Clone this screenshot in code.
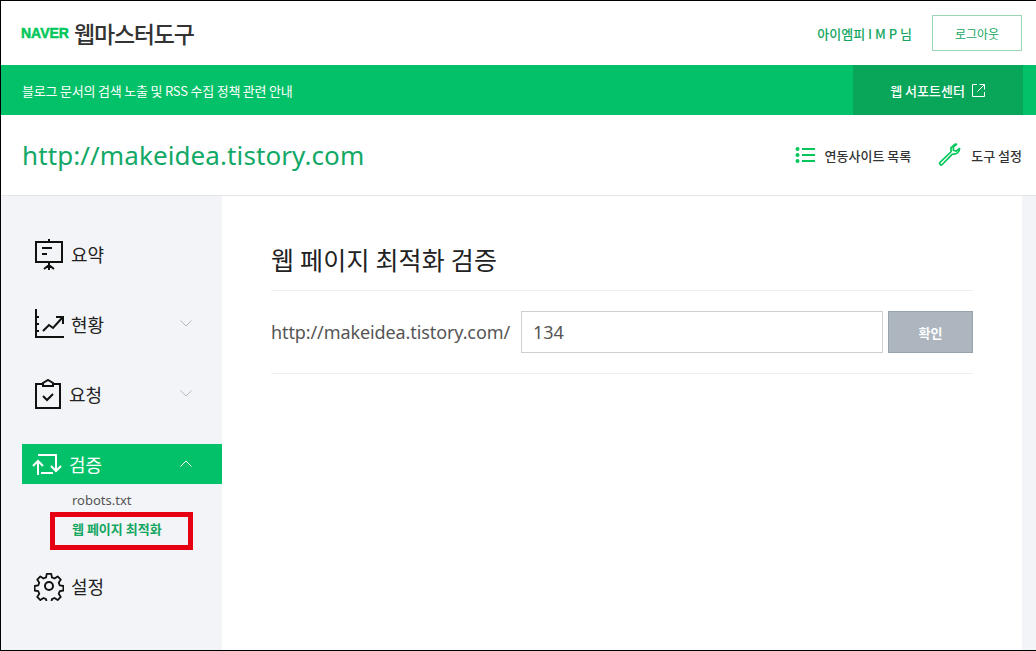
<script>
  const font = 0;
</script>

<div class="page">
  <header class="top">
    <div class="brand"><span class="naver">NAVER</span><span class="tool">웹마스터도구</span></div>
    <div class="user">
      <span class="name">아이엠피 I M P 님</span>
      <button class="logout">로그아웃</button>
    </div>
  </header>
  <div class="notice">
    <span class="notice-text">블로그 문서의 검색 노출 및 RSS 수집 정책 관련 안내</span>
    <div class="support">웹 서포트센터
      <svg width="15" height="15" viewBox="0 0 15 15" fill="none" stroke="#fff" stroke-width="1"><path d="M6 1.5H1.5v12h12V9M8.5 1.5h5v5M13.5 1.5l-7 7"/></svg>
    </div>
    <div class="notice-end"></div>
  </div>
  <div class="site">
    <h1>http://makeidea.tistory.com</h1>
    <div class="site-links">
      <span class="link">
        <svg width="20" height="18" viewBox="0 0 20 18" fill="#03c75a"><circle cx="2.5" cy="3" r="2"/><circle cx="2.5" cy="9" r="2"/><circle cx="2.5" cy="15" r="2"/><rect x="7" y="2" width="13" height="2"/><rect x="7" y="8" width="13" height="2"/><rect x="7" y="14" width="13" height="2"/></svg>
        연동사이트 목록
      </span>
      <span class="link tool-link">
        <svg width="24" height="24" viewBox="0 0 24 24" fill="none" stroke="#03c75a" stroke-width="1.7" stroke-linejoin="round"><path d="M17.5 1.5l-3.6 3.4.2 3.2c.1.4-.1.7-.3.9L3 19.300c-1.200 1.200.8 3.600 2.300 2.200l9.800-10.200c.3-.3.6-.3 1-.3 3 .5 6.500-1.500 6.500-5.500l-3.300 2.700-3-1 .2-3.400 3-2.500c-.7-.2-1.200-.3-1-.3z"/></svg>
        도구 설정
      </span>
    </div>
  </div>
  <div class="body">
    <nav class="side">
      <div class="item first">
        <svg class="ic" width="30" height="32" viewBox="0 0 30 32" fill="none" stroke="#111" stroke-width="2"><path d="M2 4h26v20H2zM15 1v3M15 24v8M10 31l5-4 5 4M8 10h10M8 16h5"/></svg>
        <span>요약</span>
      </div>
      <div class="item">
        <svg class="ic" width="30" height="30" viewBox="0 0 30 30" fill="none" stroke="#111" stroke-width="2"><path d="M2 0v28h28M2 8h3M2 15h3M2 22h3M9 22l6-6 4 3 9-10M22 8h7v7"/></svg>
        <span>현황</span>
        <svg class="chev" width="12" height="7" viewBox="0 0 12 7" fill="none" stroke="#b5b9bd"><path d="M.5.5l5.500 5.500L11.500.5"/></svg>
      </div>
      <div class="item">
        <svg class="ic" width="28" height="30" viewBox="0 0 28 30" fill="none" stroke="#111" stroke-width="2"><path d="M9 5H2v24h24V5h-7M9 7V4l5-3 5 3v3zM9 17l4 4 6-6"/></svg>
        <span>요청</span>
        <svg class="chev" width="12" height="7" viewBox="0 0 12 7" fill="none" stroke="#b5b9bd"><path d="M.5.5l5.500 5.500L11.500.5"/></svg>
      </div>
      <div class="item active">
        <svg class="ic" width="30" height="24" viewBox="0 0 30 24" fill="none" stroke="#fff" stroke-width="2"><path d="M6 23V9M1 14l5-5 5 5M6 3h18v16M19 14l5 5 5-5M9 21h12M6 3"/></svg>
        <span>검증</span>
        <svg class="chev" width="12" height="7" viewBox="0 0 12 7" fill="none" stroke="#fff"><path d="M.5 6.500L6 1l5.500 5.500"/></svg>
      </div>
      <ul class="sub">
        <li>robots.txt</li>
        <li class="cur">웹 페이지 최적화</li>
      </ul>
      <div class="item last">
        <svg class="ic" width="30" height="30" viewBox="0 0 30 30" fill="none" stroke="#111" stroke-width="2" stroke-linejoin="round"><circle cx="15" cy="15" r="4"/><path d="M12.500 1.500h5l.8 4 2.800 1.200 3.500-2.300 3.500 3.500-2.300 3.500 1.200 2.800 4 .8v5l-4 .8-1.200 2.800 2.300 3.500-3.500 3.500-3.500-2.300-2.800 1.200-.8 4h-5l-.8-4-2.800-1.200-3.500 2.300-3.500-3.500 2.300-3.500-1.200-2.800-4-.8v-5l4-.8 1.200-2.800-2.300-3.500 3.500-3.500 3.500 2.300 2.800-1.200z" transform="translate(1.500 1.500) scale(.9)"/></svg>
        <span>설정</span>
      </div>
    </nav>
    <main class="main">
      <h2>웹 페이지 최적화 검증</h2>
      <div class="form">
        <label for="u">http://makeidea.tistory.com/</label>
        <input id="u" value="134" />
        <button class="ok">확인</button>
      </div>
    </main>
    <div class="gutter"></div>
  </div>
</div>

<style>
  :global(body) { margin: 0; background: #fff; }
  * { box-sizing: border-box; }
  .page {
    width: 1036px; height: 651px; border: 1px solid #000; border-right: 0;
    display: flex; flex-direction: column; overflow: hidden;
    font-family: "Noto Sans CJK KR", "Noto Sans", sans-serif; color: #222;
  }
  .top { height: 64px; flex: none; display: flex; justify-content: space-between; align-items: center; padding: 0 14px 0 20px; }
  .brand { display: flex; align-items: center; gap: 5px; }
  .naver { font: 900 14px/1 "Liberation Sans", sans-serif; color: #03c75a; letter-spacing: 0; -webkit-text-stroke: .5px #03c75a; }
  .tool { font-size: 23px; font-weight: 500; letter-spacing: -1.2px; color: #333; line-height: 1; }
  .user { display: flex; align-items: center; gap: 20px; }
  .name { font-size: 13px; font-weight: 500; color: #14a661; }
  .logout { width: 90px; height: 36px; border: 1px solid #9bd5b5; background: #fff; color: #14a661; font: 12px "Noto Sans CJK KR", sans-serif; padding: 0; }
  .notice { height: 50px; flex: none; background: #03c168; display: flex; align-items: center; color: #fff; padding-left: 21px; }
  .notice-text { font-size: 13px; flex: 1; letter-spacing: -.2px; }
  .support { width: 170px; height: 100%; background: #09a65a; display: flex; align-items: center; justify-content: center; gap: 6px; font-size: 13px; font-weight: 500; }
  .notice-end { width: 13px; }
  .site { height: 81px; flex: none; display: flex; align-items: center; justify-content: space-between; padding: 0 14px 0 21px; border-bottom: 1px solid #e4e6e8; }
  h1 { margin: 0; font: 400 26px "Noto Sans", sans-serif; color: #12a866; letter-spacing: .1px; }
  .site-links { display: flex; align-items: center; gap: 26px; }
  .link { display: flex; align-items: center; gap: 10px; font-size: 13px; font-weight: 500; color: #333; }
  .body { flex: 1; display: flex; min-height: 0; background: #f3f4f7; }
  .side { width: 221px; flex: none; padding: 38px 0 0 21px; display: flex; flex-direction: column; }
  .item { height: 40px; display: flex; align-items: center; position: relative; padding-left: 12px; font-size: 18px; color: #222; margin-bottom: 30px; }
  .item span { margin-left: 7px; }
  .ic { flex: none; }
  .chev { position: absolute; right: 30px; top: 16px; }
  .item.active { background: #03c168; color: #fff; margin-bottom: 0; padding-left: 10px; }
  .sub { list-style: none; margin: 0; padding: 3px 0 0 50px; font-size: 13px; height: 100px; }
  .sub li { height: 28px; line-height: 26px; font-family: "Noto Sans", "Noto Sans CJK KR", sans-serif; color: #555; }
  .sub li.cur { font-weight: 700; color: #14a661; font-family: "Noto Sans CJK KR", sans-serif; }
  .sub li.cur { outline: 5px solid #e60012; outline-offset: -5px; width: 143px; height: 38px; margin: -3px 0 0 -22px; padding: 6px 0 0 22px; line-height: 22px; }
  .item.last { margin-top: -18px; }
  .main { width: 800px; flex: none; background: #fff; padding: 0 49px 0 49px; }
  h2 { margin: 0; height: 95px; padding-top: 41px; font-size: 25px; font-weight: 400; line-height: 44px; border-bottom: 1px solid #eee; color: #222; letter-spacing: .2px; }
  .form { height: 83px; display: flex; align-items: center; border-bottom: 1px solid #eee; }
  label { font: 18px "Noto Sans", sans-serif; color: #555; width: 250px; letter-spacing: -.1px; }
  input { width: 362px; height: 42px; border: 1px solid #ccd1d4; padding: 0 11px; font: 18px "Noto Sans", sans-serif; color: #555; outline: 0; }
  .ok { width: 85px; height: 42px; margin-left: 5px; background: #adb6bf; border: 1px solid #98a3ad; color: #fff; font: 700 13px "Noto Sans CJK KR", sans-serif; padding: 0; }
  .gutter { flex: 1; }
</style>
